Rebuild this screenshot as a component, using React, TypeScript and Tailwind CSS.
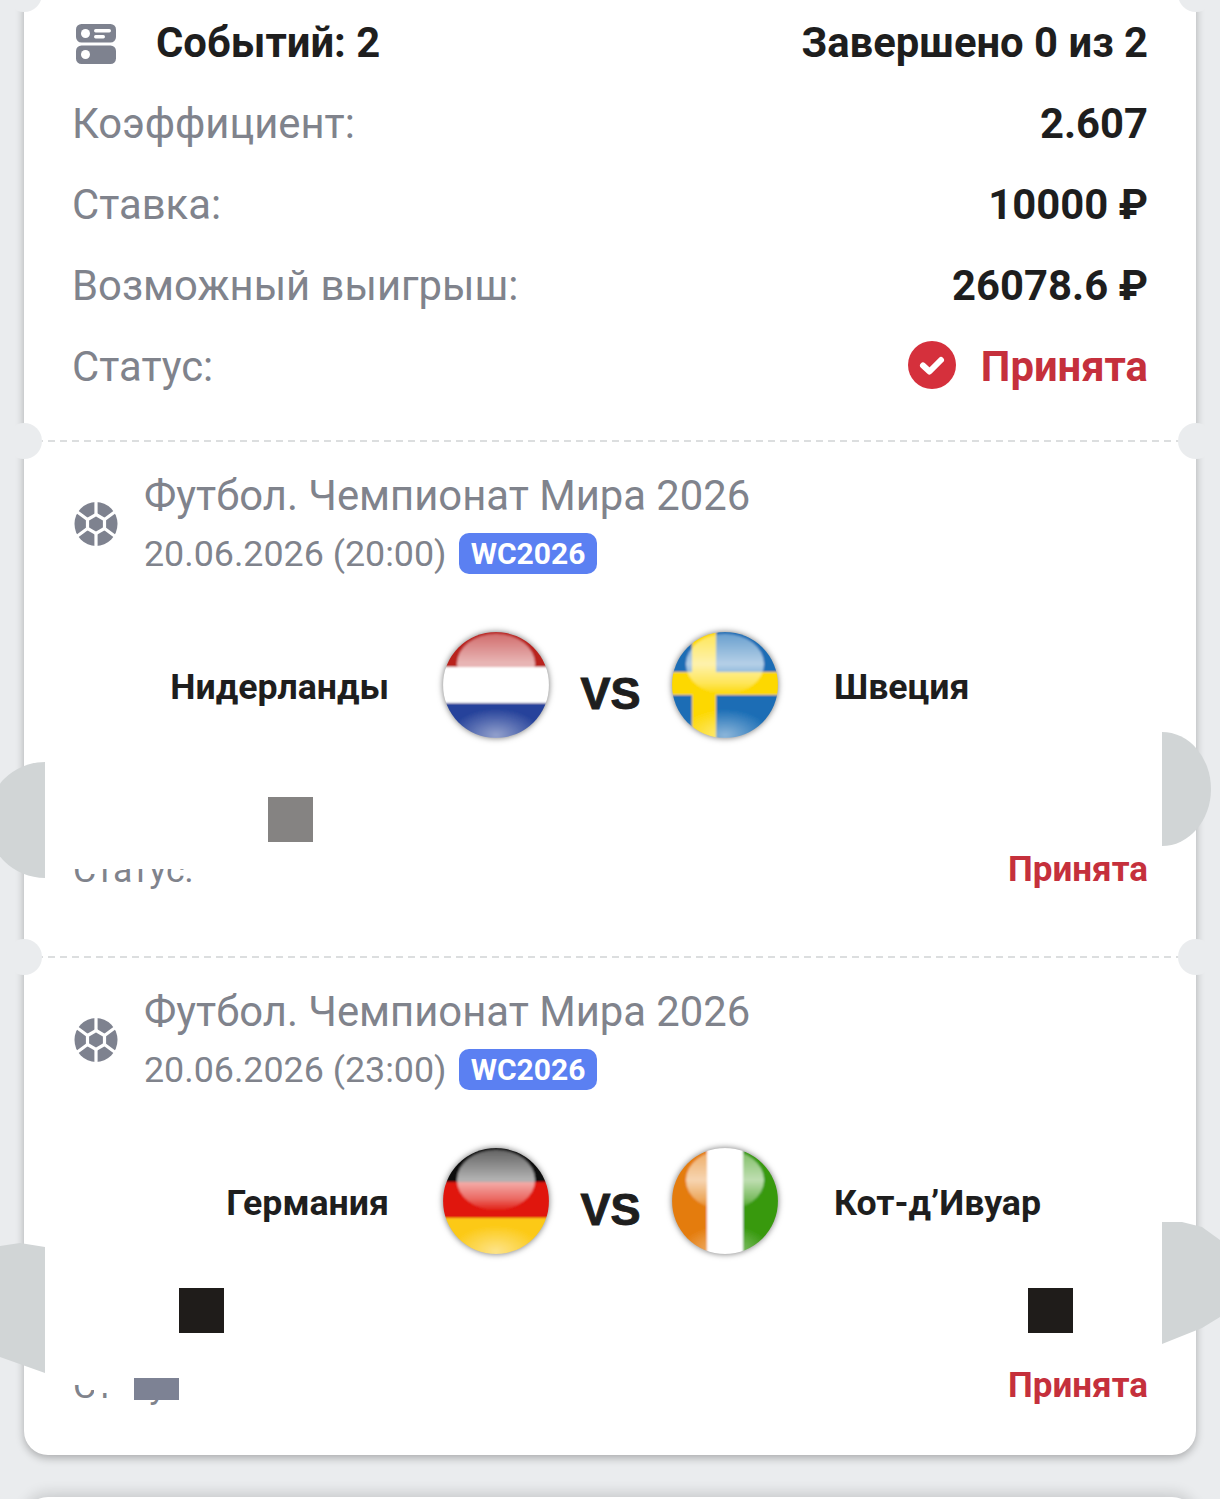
import { FC, ReactNode } from "react";

/* Ticket icon next to the event count */
const TicketIcon: FC = () => (
  <svg viewBox="0 0 40 40" className="h-10 w-10 shrink-0">
    <rect x="0" y="0" width="40" height="18.5" rx="5.5" fill="#7e828f" />
    <rect x="0" y="21.5" width="40" height="18.5" rx="5.5" fill="#7e828f" />
    <circle cx="9.5" cy="9.5" r="4.5" fill="#fff" />
    <circle cx="9.5" cy="30.5" r="4.5" fill="#fff" />
    <rect x="18" y="5" width="17" height="3.5" rx="1.7" fill="#fff" />
    <rect x="18" y="11" width="11" height="3.5" rx="1.7" fill="#fff" />
  </svg>
);

const BallIcon: FC = () => (
  <svg viewBox="0 0 44 44" className="h-11 w-11 shrink-0">
    <ellipse cx="22" cy="22" rx="21.5" ry="22" fill="#7e828f" />
    <g stroke="#fff" strokeWidth="3.2" fill="none">
      <path d="M22 12.5 30.5 17.5 30.5 26.5 22 31.5 13.5 26.5 13.5 17.5Z" fill="#7e828f" />
      <path d="M22 12.5V0M30.5 17.5 42 9M30.5 26.5 42 35M22 31.5V44M13.5 26.5 2 35M13.5 17.5 2 9" />
    </g>
  </svg>
);

const CheckBadge: FC = () => (
  <svg viewBox="0 0 48 48" className="h-12 w-12 shrink-0">
    <circle cx="24" cy="24" r="24" fill="#d5303c" />
    <path d="M15 24.5 21.5 30.5 33 19" stroke="#fff" strokeWidth="6" fill="none" strokeLinecap="round" strokeLinejoin="round" />
  </svg>
);

/* Glossy round flag: stripes plus highlight and bottom glow */
const Flag: FC<{ id: string; children: ReactNode }> = ({ id, children }) => (
  <svg viewBox="0 0 108 108" className="h-[108px] w-[108px] shrink-0 overflow-visible drop-shadow-[0_0_3px_rgba(0,0,0,0.55)]">
    <defs>
      <clipPath id={`${id}-clip`}>
        <circle cx="54" cy="54" r="53" />
      </clipPath>
      <linearGradient id={`${id}-top`} x1="0" y1="0" x2="0" y2="1">
        <stop offset="0" stopColor="#fff" stopOpacity="0.35" />
        <stop offset="0.5" stopColor="#fff" stopOpacity="0.68" />
        <stop offset="0.82" stopColor="#fff" stopOpacity="0.34" />
        <stop offset="1" stopColor="#fff" stopOpacity="0.03" />
      </linearGradient>
      <radialGradient id={`${id}-low`} cx="0.5" cy="0.8" r="0.55">
        <stop offset="0" stopColor="#fff" stopOpacity="0.5" />
        <stop offset="1" stopColor="#fff" stopOpacity="0" />
      </radialGradient>
      <filter id={`${id}-soft`} x="-10%" y="-10%" width="120%" height="120%">
        <feGaussianBlur stdDeviation="0.8" />
      </filter>
    </defs>
    <g clipPath={`url(#${id}-clip)`}>
      <g filter={`url(#${id}-soft)`}>
        {children}
        <ellipse cx="54" cy="33" rx="39" ry="30" fill={`url(#${id}-top)`} />
        <ellipse cx="54" cy="90" rx="42" ry="24" fill={`url(#${id}-low)`} />
      </g>
    </g>
  </svg>
);

const Netherlands: FC = () => (
  <Flag id="nl">
    <rect width="108" height="36" fill="#b9201f" />
    <rect y="36" width="108" height="36" fill="#fff" />
    <rect y="72" width="108" height="36" fill="#27439b" />
  </Flag>
);

const Sweden: FC = () => (
  <Flag id="se">
    <rect width="108" height="108" fill="#1a6db5" />
    <rect x="21" width="24" height="108" fill="#fdd800" />
    <rect y="41" width="108" height="23" fill="#fdd800" />
  </Flag>
);

const Germany: FC = () => (
  <Flag id="de">
    <rect width="108" height="35" fill="#111" />
    <rect y="35" width="108" height="36" fill="#e0190f" />
    <rect y="71" width="108" height="37" fill="#fcc914" />
  </Flag>
);

const IvoryCoast: FC = () => (
  <Flag id="ci">
    <rect width="36" height="108" fill="#e47c0c" />
    <rect x="36" width="36" height="108" fill="#fff" />
    <rect x="72" width="36" height="108" fill="#37990e" />
  </Flag>
);

const Divider: FC = () => (
  <div className="relative h-[2px] bg-[repeating-linear-gradient(90deg,#dcdedf_0_7px,transparent_7px_12px)]">
    <span className="absolute top-[-17px] left-[-18px] h-9 w-9 rounded-full bg-[#eaecee]" />
    <span className="absolute top-[-17px] right-[-18px] h-9 w-9 rounded-full bg-[#eaecee]" />
  </div>
);

const InfoRow: FC<{ label: string; children: ReactNode }> = ({ label, children }) => (
  <div className="flex h-[81px] items-center justify-between">
    <span className="text-[#80838c]">{label}</span>
    {children}
  </div>
);

type EventProps = {
  time: string;
  home: string;
  away: string;
  homeFlag: ReactNode;
  awayFlag: ReactNode;
  className: string;
  overlays: ReactNode;
};

const EventBlock: FC<EventProps> = ({ time, home, away, homeFlag, awayFlag, className, overlays }) => (
  <section className={`relative px-[49px] pt-[25px] ${className}`}>
    <div className="flex items-center">
      <span className="mt-[-2px] ml-px">
        <BallIcon />
      </span>
      <div className="ml-[26px] text-[#80838c]">
        <p className="text-[41.8px] leading-[58px]">Футбол. Чемпионат Мира 2026</p>
        <div className="flex h-[58px] items-center">
          <span className="w-[301px] text-[35.8px] leading-[58px] whitespace-nowrap">{time}</span>
          <span className="mt-[-2px] ml-[14px] flex h-[41px] w-[138px] items-center justify-center rounded-[10px] bg-[#5b80f2] text-[30px] font-bold text-white">
            WC2026
          </span>
        </div>
      </div>
    </div>

    <div className="mt-12 flex h-[108px] items-center text-[35.7px] font-bold text-[#1e1e1e]">
      <span className="mt-[5px] w-[316px] text-right">{home}</span>
      <span className="ml-[53px]">{homeFlag}</span>
      <span className="mt-4 w-[121px] text-center font-['Liberation_Sans',sans-serif] text-[45px] leading-none font-bold [-webkit-text-stroke:1px_#1e1e1e]">
        VS
      </span>
      <span>{awayFlag}</span>
      <span className="mt-[5px] ml-[55px]">{away}</span>
    </div>

    <div className="mt-[108px] flex h-11 items-center justify-between">
      {/* only the lower part of the label is left in the picture */}
      <div className="mt-[22px] h-[22px] overflow-hidden">
        <span className="mt-[-21px] block text-[35.6px] leading-[44px] text-[#80838c]">Статус:</span>
      </div>
      <span className="mt-[2px] mr-[-1px] text-[35px] font-bold text-[#c5303c]">Принята</span>
    </div>

    {overlays}
  </section>
);

export default function App() {
  return (
    <div className="h-[1499px] w-[1220px] overflow-hidden bg-[#eaecee] font-['Roboto',sans-serif]">
      <div className="relative mx-6 w-[1172px] rounded-b-[24px] bg-white shadow-[0_3px_8px_rgba(0,0,0,0.28)]">
        <span className="absolute top-[-24px] left-[-18px] h-9 w-9 rounded-full bg-[#eaecee]" />
        <span className="absolute top-[-24px] right-[-18px] h-9 w-9 rounded-full bg-[#eaecee]" />

        <div className="px-[48px] pt-[2px] pb-[33px] text-[41.8px] leading-none">
          <div className="flex h-[81px] items-center justify-between font-bold text-[#1e1e1e]">
            <div className="flex items-center">
              <span className="mt-[3px] ml-1">
                <TicketIcon />
              </span>
              <span className="ml-[40px]">Событий: 2</span>
            </div>
            <span>Завершено 0 из 2</span>
          </div>
          <InfoRow label="Коэффициент:">
            <span className="font-bold text-[#1e1e1e]">2.607</span>
          </InfoRow>
          <InfoRow label="Ставка:">
            <span className="font-bold text-[#1e1e1e]">10000 ₽</span>
          </InfoRow>
          <InfoRow label="Возможный выигрыш:">
            <span className="font-bold text-[#1e1e1e]">26078.6 ₽</span>
          </InfoRow>
          <InfoRow label="Статус:">
            <div className="flex items-center gap-[25px]">
              <span className="mt-[-3px]">
                <CheckBadge />
              </span>
              <span className="font-bold text-[#c5303c]">Принята</span>
            </div>
          </InfoRow>
        </div>

        <Divider />
        <EventBlock
          time="20.06.2026 (20:00)"
          home="Нидерланды"
          away="Швеция"
          homeFlag={<Netherlands />}
          awayFlag={<Sweden />}
          className="pb-[65px]"
          overlays={
            <>
              <span className="absolute top-[320px] left-[-37px] h-[116px] w-[58px] rounded-l-[58px] bg-[#d1d5d6]" />
              <span className="absolute top-[290px] left-[1138px] h-[114px] w-[49px] rounded-r-[49px_57px] bg-[#d1d5d6]" />
              <span className="absolute top-[355px] left-[244px] h-[45px] w-[45px] bg-[#858382]" />
            </>
          }
        />
        <Divider />
        <EventBlock
          time="20.06.2026 (23:00)"
          home="Германия"
          away="Кот-д’Ивуар"
          homeFlag={<Germany />}
          awayFlag={<IvoryCoast />}
          className="pb-12"
          overlays={
            <>
              <span className="absolute top-[285px] left-[-24px] h-[130px] w-[45px] bg-[#d1d5d6] [clip-path:polygon(0_3px,20px_0,45px_4px,45px_130px,0_114px)]" />
              <span className="absolute top-[264px] left-[1138px] h-[122px] w-[58px] bg-[#d1d5d6] [clip-path:polygon(0_0,20px_0,40px_5px,58px_18px,58px_95px,40px_106px,0_122px)]" />
              <span className="absolute top-[330px] left-[155px] h-[45px] w-[45px] bg-[#1f1c1a]" />
              <span className="absolute top-[330px] left-[1004px] h-[45px] w-[45px] bg-[#1f1c1a]" />
              <span className="absolute top-[420px] left-[70px] h-[15px] w-[40px] bg-white" />
              <span className="absolute top-[420px] left-[88px] h-[30px] w-[22px] bg-white" />
              <span className="absolute top-[420px] left-[110px] h-[22px] w-[45px] bg-[#7d8294]" />
              <span className="absolute top-[420px] left-[155px] h-[30px] w-[20px] bg-white" />
            </>
          }
        />
      </div>
      <div className="mx-6 mt-[42px] h-10 rounded-t-[24px] bg-white shadow-[0_-4px_14px_rgba(0,0,0,0.14)]" />
    </div>
  );
}
